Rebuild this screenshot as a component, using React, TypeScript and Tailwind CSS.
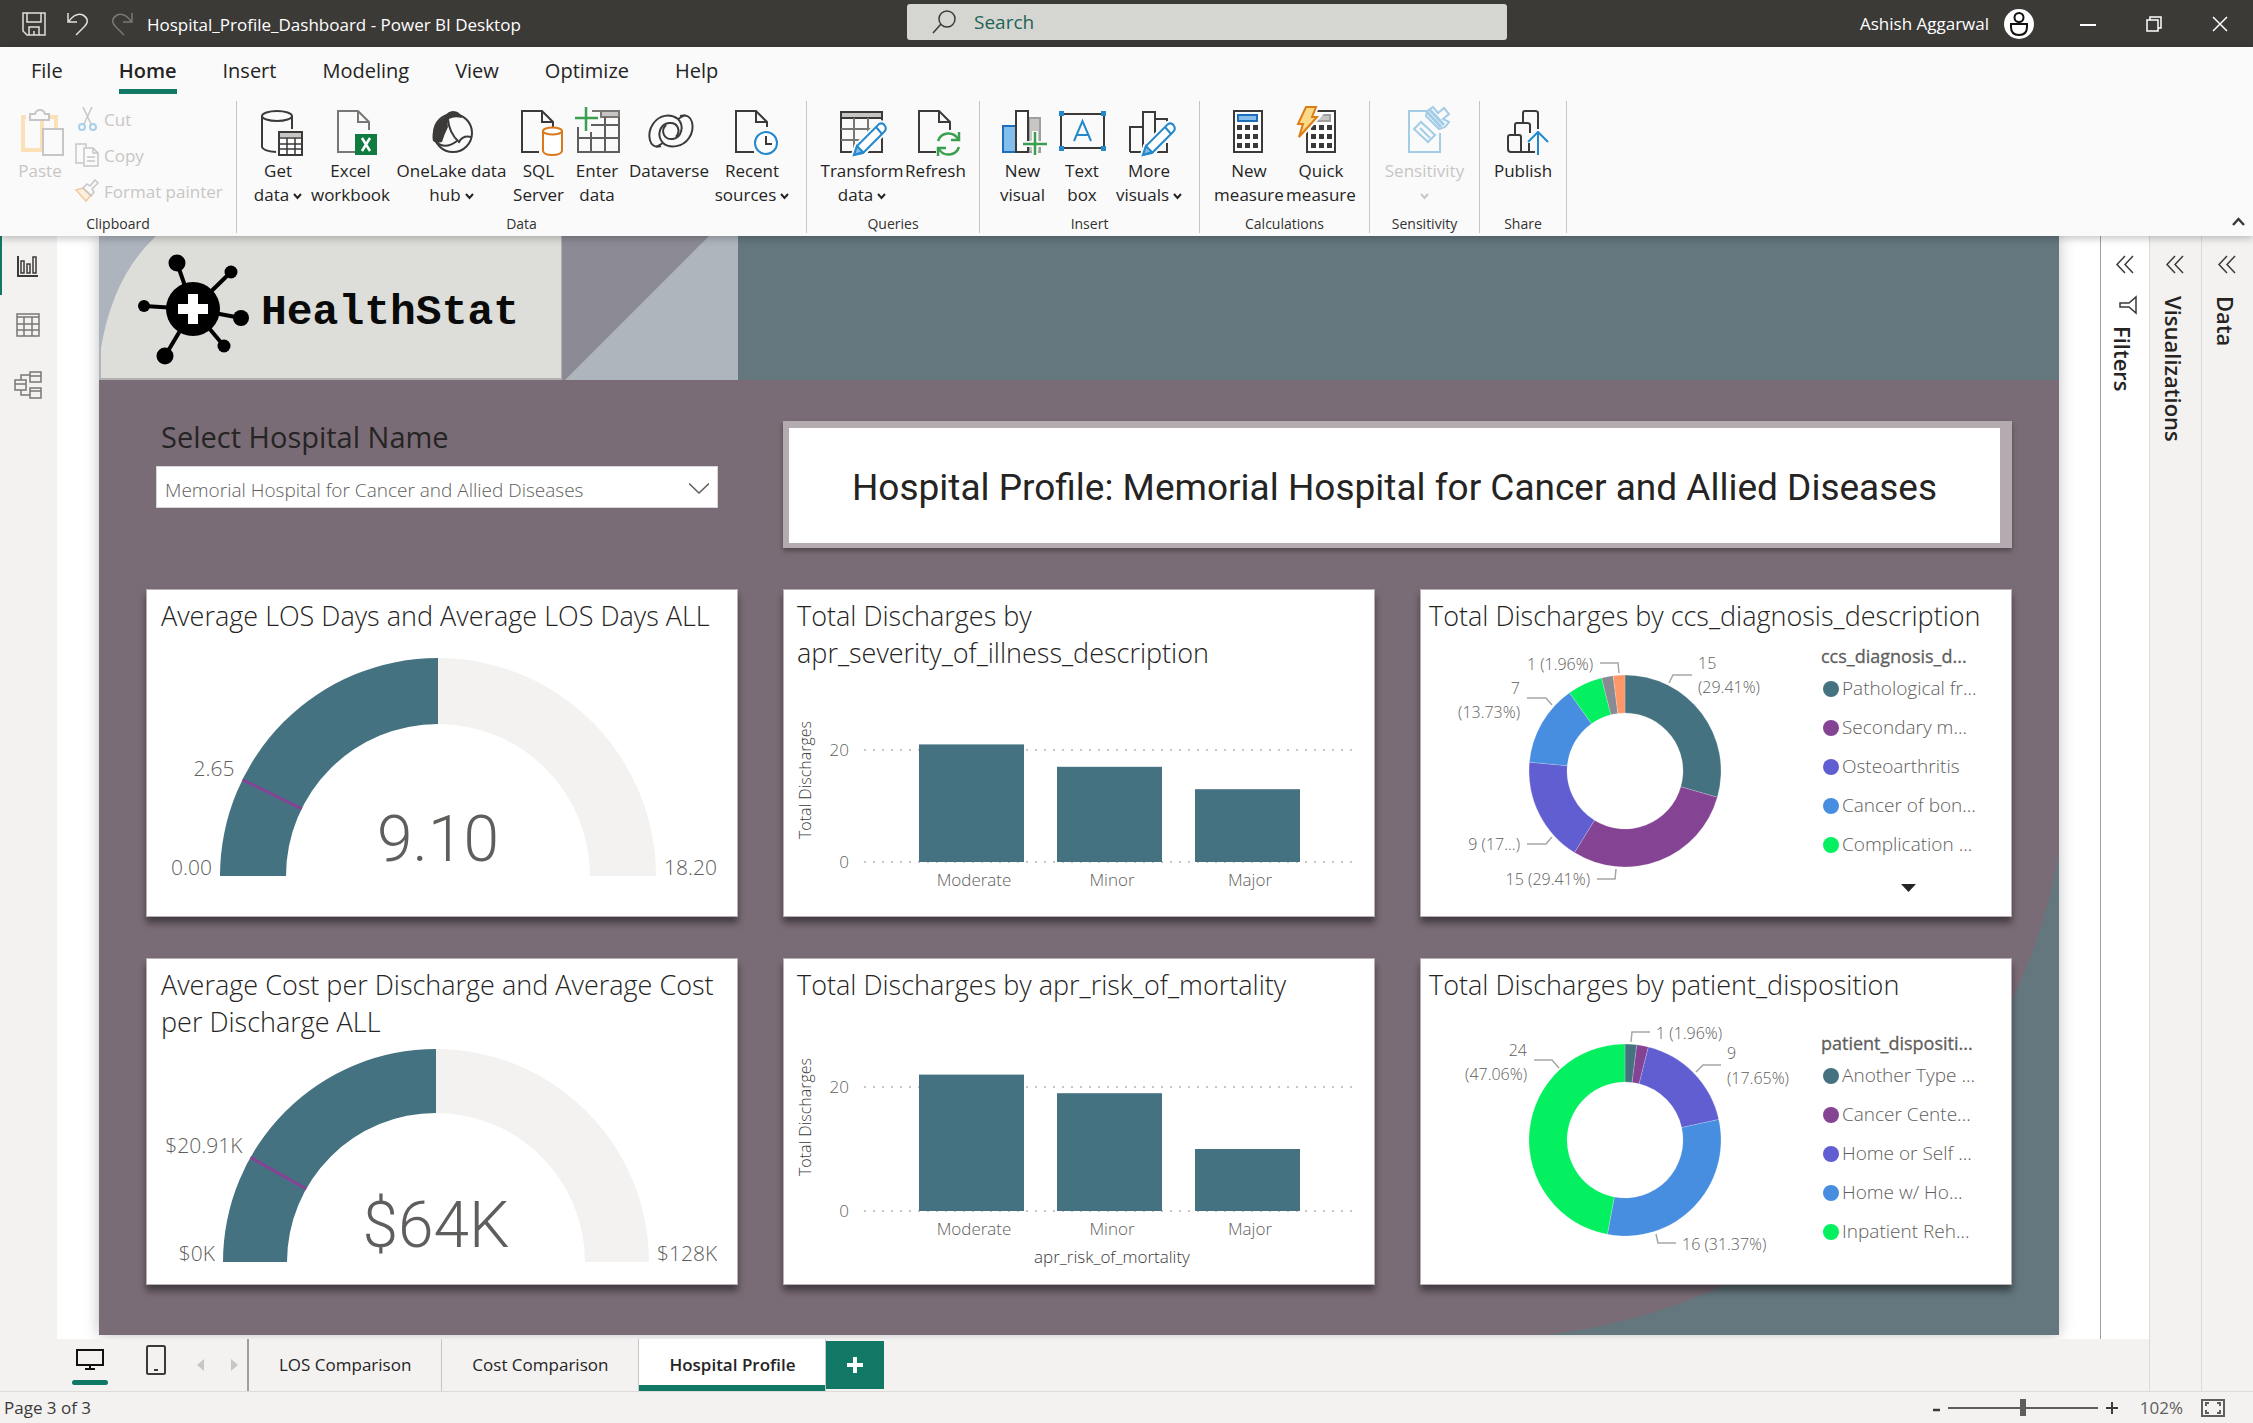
import React, { ReactNode } from "react";

const TEAL = "#457281";
const PURPLE = "#854493";
const INDIGO = "#605ED0";
const BLUE = "#478EE0";
const GREEN = "#04F061";
const GRAY = "#898B94";
const ORANGE = "#FF9768";
const INK = "#3b3a39";
const BLUEINK = "#2488cc";

/* ---------- icons ---------- */

function Icon({ w = 48, h = 50, className = "", children }: { w?: number; h?: number; className?: string; children: ReactNode }) {
  return (
    <svg width={w} height={h} viewBox={`0 0 ${w} ${h}`} fill="none" stroke={INK} strokeWidth={2} className={`shrink-0 overflow-visible ${className}`} aria-hidden="true">
      {children}
    </svg>
  );
}

function Page({ x, c = INK, cut = false }: { x: number; c?: string; cut?: boolean }) {
  return (
    <g stroke={c}>
      <path d={cut ? `M${x + 18} 45H${x}V4h20l11 11v5` : `M${x + 17} 45H${x}V4h20l11 11v8`} />
      <path d={`M${x + 20} 4v11h11`} />
    </g>
  );
}

function Pencil({ x }: { x: number }) {
  return (
    <g transform={`translate(${x} 0)`}>
      <path d="M0 48L3 39L25 17Q29 15 31 19Q33 22 30 25L9 46Z" fill="#fff" stroke="#fafafa" strokeWidth="6" />
      <path d="M0 48L3 39L25 17Q29 15 31 19Q33 22 30 25L9 46Z" fill="#fff" stroke={BLUEINK} />
      <path d="M0 48L3 39L9 45Z" fill="#83beec" stroke={BLUEINK} />
      <path d="M22 20L28 27" stroke={BLUEINK} />
    </g>
  );
}

function CalcKeys({ x, y }: { x: number; y: number }) {
  return (
    <g fill={INK} stroke="none">
      {[0, 9, 18].map((dy) => [0, 8, 16].map((dx) => <rect key={`${dx}-${dy}`} x={x + dx} y={y + dy} width="5" height="5" />))}
    </g>
  );
}

const GetDataIcon = () => (
  <Icon>
    <ellipse cx="23" cy="9" rx="15" ry="5" />
    <path d="M8 9V40Q9 44 22 45M38 9V22" />
    <rect x="25" y="25" width="23" height="23" fill="#fff" />
    <rect x="26" y="26" width="21" height="4" fill="#c8c6c4" stroke="none" />
    <path d="M25 31H48M25 37H48M25 42H48M33 31V48M41 31V48" strokeWidth="1.5" />
  </Icon>
);
const ExcelIcon = () => (
  <Icon>
    <Page x={11} c="#797774" />
    <rect x="28" y="27" width="22" height="21" fill="#107c41" stroke="none" />
    <path d="M35 31L43 44M43 31L35 44" stroke="#fff" strokeWidth="2.5" />
  </Icon>
);
const OneLakeIcon = () => (
  <Icon>
    <circle cx="25" cy="26" r="19" />
    <path d="M16 10Q20 4 25 4Q32 4 34 11Q26 9 21 12Q19 15 20 20Q16 28 14 35Q8 37 5 34Q2 20 16 10Z" fill={INK} stroke="none" />
    <path d="M20 12Q21 26 31 35Q35 28 43 30" />
    <path d="M8 35Q17 43 29 34" />
  </Icon>
);
const SqlIcon = () => (
  <Icon>
    <Page x={7} />
    <path d="M28 24V44Q29 48 37 48Q46 48 47 44V24" fill="#fff" stroke="#d87a1c" />
    <ellipse cx="37.500" cy="24" rx="9.500" ry="3.500" fill="#fff" stroke="#d87a1c" />
  </Icon>
);
const EnterIcon = () => (
  <Icon>
    <path d="M19 4H46V10H28V4" fill="#c8c6c4" stroke="#797774" />
    <path d="M5 20V45H46V10M5 31H46M18 25V45M32 10V45M18 18H46" stroke="#605e5c" />
    <path d="M13 0V24M2 11H25" stroke="#3a9f4f" strokeWidth="2.500" />
  </Icon>
);
const DataverseIcon = () => (
  <Icon>
    <path d="M16 39C3 43 2 26 8 17C14 8 25 6 33 12C40 19 36 31 28 32C19 33 15 24 21 18" />
    <path d="M35 9C49 5 50 22 44 31C38 40 25 42 18 36C11 28 15 17 24 16C33 15 36 24 31 30" />
    <path d="M33 12L40 8M18 36L11 40" />
  </Icon>
);
const RecentIcon = () => (
  <Icon>
    <Page x={8} cut />
    <circle cx="38" cy="36" r="11" fill="#fff" stroke={BLUEINK} />
    <path d="M38 29V37H44" />
  </Icon>
);
const TransformIcon = () => (
  <Icon>
    <rect x="3" y="5" width="41" height="6" fill="#c8c6c4" />
    <path d="M3 11V45H20M44 11V45H30" />
    <path d="M3 22H44M3 33H30M16 11V45M30 11V34" stroke="#797774" />
    <Pencil x={16} />
  </Icon>
);
const RefreshIcon = () => (
  <Icon>
    <Page x={7} />
    <g stroke="#3a9f4f" strokeWidth="2.500">
      <path d="M26 34A11 11 0 0 1 46 32M47 40A11 11 0 0 1 27 42" />
      <path d="M47 25V33H39M26 49V41H34" />
    </g>
  </Icon>
);
const NewVisualIcon = () => (
  <Icon>
    <rect x="30" y="11" width="11" height="34" fill="#c8c6c4" stroke="#a19f9d" />
    <rect x="4" y="19" width="13" height="26" fill="#83beec" stroke="#1c6fb8" />
    <rect x="17" y="4" width="12" height="41" fill="#fff" />
    <path d="M36 24V49M24 37H48" stroke="#fafafa" strokeWidth="6" />
    <path d="M36 25V48M24 37H48" stroke="#3a9f4f" strokeWidth="2.500" />
  </Icon>
);
const TextBoxIcon = () => (
  <Icon>
    <rect x="3" y="7" width="43" height="34" />
    <g fill={BLUEINK} stroke="none">
      <rect x="1" y="4" width="5" height="5" /><rect x="43" y="4" width="5" height="5" />
      <rect x="1" y="39" width="5" height="5" /><rect x="43" y="39" width="5" height="5" />
    </g>
    <path d="M16 34L24.500 14L33 34M19 28H30" stroke={BLUEINK} />
  </Icon>
);
const MoreVisualsIcon = () => (
  <Icon>
    <path d="M5 45V20H18M18 45V5H30V45M30 12H42V20M5 45H20M32 45H42V36" />
    <Pencil x={18} />
  </Icon>
);
const NewMeasureIcon = () => (
  <Icon>
    <rect x="9" y="4" width="28" height="41" fill="#fff" />
    <rect x="13" y="8" width="19" height="6" fill="#83beec" stroke="#1c6fb8" />
    <CalcKeys x={12} y={18} />
  </Icon>
);
const QuickMeasureIcon = () => (
  <Icon>
    <rect x="10" y="4" width="28" height="41" fill="#fff" />
    <rect x="18" y="8" width="15" height="6" fill="#c8c6c4" stroke="#a19f9d" />
    <CalcKeys x={14} y={18} />
    <path d="M9 0H19L15 10H20L2 30L6 17H1Z" fill="#fafafa" stroke="#fafafa" strokeWidth="6" />
    <path d="M9 0H19L15 10H20L2 30L6 17H1Z" fill="#fdd98a" stroke="#dd7d12" />
  </Icon>
);
const SensitivityIcon = () => (
  <Icon className="opacity-40">
    <g stroke={BLUEINK}>
      <path d="M26 4H8V45H39V26" />
      <path d="M13 22L20 15L34 28L27 35Z" />
      <path d="M19 21L29 31" />
      <path d="M25 9L38 22L44 20L48 15L42 12L48 7L43 1L37 6L32 0L26 4Z" />
      <path d="M26 5L40 20M29 3L43 18" strokeWidth="3" />
    </g>
  </Icon>
);
const PublishIcon = () => (
  <Icon>
    <path d="M9 30Q9 28 11 28H20Q22 28 22 30V45H12Q9 45 9 42ZM16 28V18Q16 16 18 16H28Q31 16 31 18V26M24 16V6Q24 4 26 4H36Q39 4 39 6V22M22 45H36M30 36V45" />
    <path d="M39 48V26M29 35L39 25L49 35" stroke={BLUEINK} />
  </Icon>
);

function Caret({ className = "" }: { className?: string }) {
  return (
    <svg width="9" height="7" viewBox="0 0 9 7" className={`inline-block ${className}`} fill="none" stroke="currentColor" strokeWidth="2" aria-hidden="true">
      <path d="M1 1L4.500 5L8 1" />
    </svg>
  );
}

/* ---------- title bar ---------- */

function TitleBar() {
  return (
    <header className="flex h-[47px] items-center bg-[#3b3a37] text-[17px] text-white">
      <div className="flex w-[907px] shrink-0 items-center pl-[22px]">
        <button aria-label="Save" className="mr-5">
          <Icon w={24} h={24}>
            <g stroke="#e1dfdd" strokeWidth="1.500">
              <path d="M1 1H23V23H5L1 19Z" /><path d="M5 1V10H19V1M7 23V15H17V23M12 19V23" />
            </g>
          </Icon>
        </button>
        <button aria-label="Undo" className="mr-5">
          <Icon w={24} h={24}><path d="M2 1V10H11M3 9Q10 0 17 3Q25 8 18 15L10 23" stroke="#e1dfdd" strokeWidth="1.500" /></Icon>
        </button>
        <button aria-label="Redo" className="mr-[13px]">
          <Icon w={24} h={24}><path d="M22 1V10H13M21 9Q14 0 7 3Q-1 8 6 15L14 23" stroke="#7a7876" strokeWidth="1.500" /></Icon>
        </button>
        <h1 className="pt-0.5">Hospital_Profile_Dashboard - Power BI Desktop</h1>
      </div>
      <label className="mb-1 flex h-9 w-[600px] items-center gap-[18px] rounded-[3px] bg-[#d5d5d2] pl-[25px]">
        <Icon w={24} h={24}><circle cx="15" cy="9" r="8" strokeWidth="1.500" /><path d="M9 14L1 23" strokeWidth="1.500" /></Icon>
        <input type="search" aria-label="Search" placeholder="Search" className="w-full bg-transparent pt-0.5 text-[19px] outline-none placeholder:text-[#1f6455]" />
      </label>
      <div className="ml-auto flex items-center pr-[25px]">
        <span className="mr-[15px]">Ashish Aggarwal</span>
        <button aria-label="Account" className="mr-[46px]">
          <Icon w={30} h={30}>
            <circle cx="15" cy="15" r="15" fill="#fff" stroke="none" />
            <circle cx="15" cy="8.500" r="4.500" stroke="#111" /><path d="M7 15H23V18Q23 26 15 26Q7 26 7 18Z" stroke="#111" />
          </Icon>
        </button>
        <button aria-label="Minimize" className="mr-[50px]"><Icon w={16} h={16}><path d="M0 9H16" stroke="#fff" /></Icon></button>
        <button aria-label="Restore" className="mr-[50px]"><Icon w={16} h={16}><path d="M1 4H12V15H1ZM4 4V1H15V12H12" stroke="#fff" strokeWidth="1.500" /></Icon></button>
        <button aria-label="Close"><Icon w={16} h={16}><path d="M1 1L15 15M15 1L1 15" stroke="#fff" strokeWidth="1.500" /></Icon></button>
      </div>
    </header>
  );
}

/* ---------- ribbon ---------- */

function Tool({ icon, top, bottom, caret, className, disabled }: { icon: ReactNode; top: string; bottom?: string; caret?: boolean; className: string; disabled?: boolean }) {
  return (
    <button disabled={disabled} className={`flex flex-col items-center whitespace-nowrap leading-6 ${disabled ? "text-[#c8c6c4]" : "text-[#252423]"} ${className}`}>
      <span className="mb-0.5 block">{icon}</span>
      <span>{top}</span>
      <span>{bottom}{caret && <Caret className={bottom ? "ml-1" : ""} />}</span>
    </button>
  );
}

function Group({ label, className, children }: { label: string; className: string; children: ReactNode }) {
  return (
    <section aria-label={label} className="flex flex-col border-r border-[#c8c6c4]">
      <div className={`flex h-[114px] pt-1.5 ${className}`}>{children}</div>
      <div className="text-center text-sm leading-[18px] text-[#323130]">{label}</div>
    </section>
  );
}

const menu = [
  { name: "File", cls: "mr-14" },
  { name: "Home", cls: "mr-[46px] font-semibold", active: true },
  { name: "Insert", cls: "mr-[46px]" },
  { name: "Modeling", cls: "mr-[46px]" },
  { name: "View", cls: "mr-[46px]" },
  { name: "Optimize", cls: "mr-[46px]" },
  { name: "Help", cls: "" },
];

function Ribbon() {
  return (
    <div className="relative z-10 bg-[#fafafa] pb-[3px] text-[17px] shadow-[0_2px_8px_rgba(0,0,0,0.25)]">
      <nav className="flex h-[54px] pl-[31px] text-xl text-[#252423]">
        {menu.map((m) => (
          <button key={m.name} className={`flex flex-col items-center pt-2 leading-8 ${m.cls}`}>
            {m.name}
            {m.active && <span className="mt-0.5 h-[5px] w-full bg-[#117865]" />}
          </button>
        ))}
      </nav>
      <div className="flex">
        <Group label="Clipboard" className="w-[236px] pl-[17px] text-[#c8c6c4]">
          <button disabled className="mr-3 flex w-[46px] flex-col items-center leading-6">
            <span className="mb-0.5 block">
              <Icon>
                <path d="M10 10H7V43H26V10M40 24V10H34" stroke="#fbe0b8" strokeWidth="4" />
                <path d="M14 7H19Q20 3 24 3Q28 3 29 7H33V13H14Z" fill="#fafafa" stroke="#c8c6c4" />
                <rect x="27" y="22" width="20" height="26" fill="#fafafa" stroke="#c8c6c4" />
              </Icon>
            </span>
            Paste
          </button>
          <div className="flex flex-col">
            <button disabled className="flex h-9 items-start gap-[5px]">
              <Icon w={24} h={24}><path d="M8 0L16 17M17 0L9 17" stroke="#c8c6c4" strokeWidth="1.500" /><circle cx="7" cy="20" r="3" stroke="#a7d0ea" /><circle cx="18" cy="20" r="3" stroke="#a7d0ea" /></Icon>Cut
            </button>
            <button disabled className="flex h-9 items-start gap-[5px]">
              <Icon w={24} h={24}><g stroke="#c8c6c4" strokeWidth="1.500"><path d="M8 20H1V1H11V4M9 5H18L23 10V23H9ZM18 5V10H23M12 14H20M12 18H20" /></g></Icon>Copy
            </button>
            <button disabled className="flex h-9 items-start gap-[5px]">
              <Icon w={24} h={24}><path d="M1 11L8 9L16 16L11 22Z" fill="#fdeedd" stroke="#f3c99d" strokeWidth="1.500" /><path d="M8 9L12 5L15 7L20 1L23 4L17 10L19 13L16 17Z" stroke="#c8c6c4" strokeWidth="1.500" /></Icon>Format painter
            </button>
          </div>
        </Group>
        <Group label="Data" className="pr-[14px] pl-3">
          <Tool icon={<GetDataIcon />} top="Get" bottom="data" caret className="w-[58px]" />
          <Tool icon={<ExcelIcon />} top="Excel" bottom="workbook" className="w-[87px]" />
          <Tool icon={<OneLakeIcon />} top="OneLake data" bottom="hub" caret className="w-[115px]" />
          <Tool icon={<SqlIcon />} top="SQL" bottom="Server" className="w-[59px]" />
          <Tool icon={<EnterIcon />} top="Enter" bottom="data" className="w-[58px]" />
          <Tool icon={<DataverseIcon />} top="Dataverse" className="w-[86px]" />
          <Tool icon={<RecentIcon />} top="Recent" bottom="sources" caret className="w-20" />
        </Group>
        <Group label="Queries" className="pr-3 pl-[13px]">
          <Tool icon={<TransformIcon />} top="Transform" bottom="data" caret className="w-[84px]" />
          <Tool icon={<RefreshIcon />} top="Refresh" className="w-[63px]" />
        </Group>
        <Group label="Insert" className="px-[14px]">
          <Tool icon={<NewVisualIcon />} top="New" bottom="visual" className="w-[57px]" />
          <Tool icon={<TextBoxIcon />} top="Text" bottom="box" className="w-[62px]" />
          <Tool icon={<MoreVisualsIcon />} top="More" bottom="visuals" caret className="w-[72px]" />
        </Group>
        <Group label="Calculations" className="pr-3 pl-[13px]">
          <Tool icon={<NewMeasureIcon />} top="New" bottom="measure" className="w-[72px]" />
          <Tool icon={<QuickMeasureIcon />} top="Quick" bottom="measure" className="w-[72px]" />
        </Group>
        <Group label="Sensitivity" className="px-[10px]">
          <Tool icon={<SensitivityIcon />} top="Sensitivity" caret disabled className="w-[89px]" />
        </Group>
        <Group label="Share" className="px-[10px]">
          <Tool icon={<PublishIcon />} top="Publish" className="w-[66px]" />
        </Group>
        <button aria-label="Collapse ribbon" className="mt-auto mr-2 mb-1.5 ml-auto">
          <Icon w={13} h={10}><path d="M1 8L6.500 2L12 8" strokeWidth="2.500" /></Icon>
        </button>
      </div>
    </div>
  );
}

/* ---------- side rails ---------- */

function ViewRail() {
  return (
    <nav className="flex w-[57px] shrink-0 flex-col bg-[#f3f2f1]">
      <button aria-label="Report view" className="flex h-[59px] items-center border-l-2 border-[#117865] pl-[14px]">
        <Icon w={24} h={24}><g strokeWidth="1.500"><path d="M2 2V22H22" strokeWidth="2" /><path d="M5 7H8V19H5ZM11 10H14V19H11ZM17 3H20V19H17Z" /></g></Icon>
      </button>
      <button aria-label="Table view" className="flex h-[60px] items-center pl-4">
        <Icon w={24} h={24}><g stroke="#797774" strokeWidth="1.500"><path d="M1 1H23V23H1ZM1 4H23M1 11H23M1 17H23M8 4V23M16 4V23" /></g></Icon>
      </button>
      <button aria-label="Model view" className="flex h-[60px] items-center pl-[14px]">
        <Icon w={28} h={28}><g stroke="#797774" strokeWidth="1.500"><path d="M16 1H27V11H16ZM16 5H27M1 9H12V19H1ZM1 13H12M16 17H27V27H16ZM16 20H27M7 9V4H16M7 19V24H16" /></g></Icon>
      </button>
    </nav>
  );
}

function Pane({ label, className, funnel }: { label: string; className: string; funnel?: boolean }) {
  return (
    <aside className={`flex shrink-0 flex-col items-center border-l pt-[19px] ${className}`}>
      <button aria-label={`Expand ${label}`}>
        <Icon w={19} h={19}><path d="M9 1L1 9.500L9 18M17 1L9 9.500L17 18" strokeWidth="1.500" /></Icon>
      </button>
      {funnel && <Icon w={18} h={18} className="mt-[22px] ml-1.5"><path d="M17 1V17L10 11H1V7H10Z" strokeWidth="1.500" /></Icon>}
      <h2 className={`mr-1 text-[22px] leading-8 font-semibold text-[#252423] [writing-mode:vertical-rl] ${funnel ? "mt-3" : "mt-[22px]"}`}>{label}</h2>
    </aside>
  );
}

/* ---------- charts ---------- */

const cardCls = "flex flex-col bg-white shadow-[inset_0_0_0_1px_#b9b0b6,0_6px_7px_rgba(0,0,0,0.45)]";

function Card({ title, className = "px-[15px]", children }: { title: ReactNode; className?: string; children: ReactNode }) {
  return (
    <article className={cardCls}>
      <h3 className={`pt-2 pb-px text-[27px] leading-[37px] font-light text-[#252423] ${className}`}>{title}</h3>
      {children}
    </article>
  );
}

function arc(cx: number, cy: number, r: number, ri: number, a0: number, a1: number) {
  const p = (rad: number, a: number) => `${(cx + rad * Math.sin(a)).toFixed(2)} ${(cy - rad * Math.cos(a)).toFixed(2)}`;
  const big = a1 - a0 > Math.PI ? 1 : 0;
  return `M${p(r, a0)}A${r} ${r} 0 ${big} 1 ${p(r, a1)}L${p(ri, a1)}A${ri} ${ri} 0 ${big} 0 ${p(ri, a0)}Z`;
}

interface GaugeProps { top: number; height: number; cx: number; cy: number; r: number; ri: number; target: number; targetLabel: string; min: string; max: string; value: string }

function Gauge({ top, height, cx, cy, r, ri, target, targetLabel, min, max, value }: GaugeProps) {
  const a = target * Math.PI;
  const c = Math.cos(a);
  const s = Math.sin(a);
  return (
    <svg viewBox={`0 ${top} 592 ${height}`} className="block w-full font-light" fill="#605e5c" fontSize="21">
      <path d={arc(cx, cy, r, ri, -Math.PI / 2, 0)} fill={TEAL} />
      <path d={arc(cx, cy, r, ri, 0, Math.PI / 2)} fill="#f3f2f1" />
      <path d={`M${cx - r * c} ${cy - r * s}L${cx - ri * c} ${cy - ri * s}`} stroke={PURPLE} strokeWidth="3" />
      <text x={cx - r * c - 8} y={cy - r * s - 4} textAnchor="end">{targetLabel}</text>
      <text x={cx - r - 8} y={cy - 1} textAnchor="end">{min}</text>
      <text x={cx + r + 8} y={cy - 1}>{max}</text>
      <text x={cx} y={cy - 15} textAnchor="middle" fontSize="64" className="font-[Roboto] font-light">{value}</text>
    </svg>
  );
}

interface BarsProps { top: number; height: number; y20: number; y0: number; titleY: number; values: number[]; axis?: string }

function Bars({ top, height, y20, y0, titleY, values, axis }: BarsProps) {
  const unit = (y0 - y20) / 20;
  return (
    <svg viewBox={`0 ${top} 592 ${height}`} className="block w-full font-light" fill="#605e5c" fontSize="17">
      <g stroke="#c8c6c4" strokeWidth="2" strokeDasharray="2 7">
        <path d={`M81 ${y20}H570M81 ${y0}H570`} />
      </g>
      <text x="66" y={y20 + 6} textAnchor="end">20</text>
      <text x="66" y={y0 + 6} textAnchor="end">0</text>
      <text transform={`translate(28 ${titleY}) rotate(-90)`} textAnchor="middle" fontSize="16" fill="#3b3a39">Total Discharges</text>
      {["Moderate", "Minor", "Major"].map((name, i) => (
        <g key={name}>
          <rect x={136 + i * 138} y={y0 - values[i] * unit} width="105" height={values[i] * unit} fill={TEAL} />
          <text x={191 + i * 138} y={y0 + 24} textAnchor="middle">{name}</text>
        </g>
      ))}
      {axis && <text x="329" y={y0 + 52} textAnchor="middle" fill="#3b3a39">{axis}</text>}
    </svg>
  );
}

function Donut({ top, height, cy, slices, children }: { top: number; height: number; cy: number; slices: [number, string][]; children: ReactNode }) {
  let acc = 0;
  return (
    <svg viewBox={`0 ${top} 400 ${height}`} className="block w-[400px] shrink-0 font-light" fill="#605e5c" fontSize="16">
      {slices.map(([n, color], i) => {
        const a0 = (acc / 51) * 2 * Math.PI;
        acc += n;
        return <path key={i} d={arc(205, cy, 96, 58, a0, (acc / 51) * 2 * Math.PI)} fill={color} stroke="#fff" strokeOpacity="0.4" strokeWidth="0.500" />;
      })}
      {children}
    </svg>
  );
}

function Leader({ d }: { d: string }) {
  return <path d={d} fill="none" stroke="#a6a6a6" strokeWidth="1.500" />;
}

function Legend({ title, items, className, more }: { title: string; items: [string, string][]; className: string; more?: boolean }) {
  return (
    <div className={`w-[170px] text-[19px] whitespace-nowrap text-[#605e5c] ${className}`}>
      <div className="pl-px text-lg leading-[26px] font-normal [-webkit-text-stroke:0.3px_#605e5c]">{title}</div>
      <ul className="font-light">
        {items.map(([name, dot]) => (
          <li key={name} className="flex h-[39px] items-center gap-[3px] pl-[3px]">
            <span className={`size-4 shrink-0 rounded-full ${dot}`} />
            {name}
          </li>
        ))}
      </ul>
      {more && (
        <button aria-label="More legend items" className="mt-5 ml-[81px] block">
          <svg width="15" height="8" viewBox="0 0 15 8" aria-hidden="true"><path d="M0 0H15L7.500 8Z" fill="#252423" /></svg>
        </button>
      )}
    </div>
  );
}

/* ---------- report canvas ---------- */

function LogoBanner() {
  return (
    <div className="flex h-[144px]">
      <svg width="463" height="144" viewBox="0 0 463 144" className="shrink-0" role="img" aria-label="HealthStat logo">
        <rect width="463" height="144" fill="#dddeda" />
        <path d="M0 0H57Q14 40 2 112V144H0Z" fill="#adb4bd" />
        <path d="M0 143H463M463 0V144" stroke="#b3aeb1" strokeWidth="2" />
        <g stroke="#000" strokeWidth="4">
          <path d="M94 73L78 27M94 73L132 36M94 73L45 70M94 73L142 82M94 73L125 110M94 73L66 120" />
        </g>
        <circle cx="94" cy="73" r="27" />
        <circle cx="78" cy="27" r="8.500" /><circle cx="132" cy="36" r="6.500" /><circle cx="45" cy="70" r="6" />
        <circle cx="142" cy="82" r="8" /><circle cx="125" cy="110" r="6.500" /><circle cx="66" cy="120" r="8.500" />
        <path d="M89 58H99V68H109V78H99V88H89V78H79V68H89Z" fill="#fff" />
        <text x="162" y="88" fontSize="43" className="font-['Liberation_Mono'] font-bold" fill="#0a0a0a">HealthStat</text>
      </svg>
      <svg width="176" height="144" viewBox="0 0 176 144" className="shrink-0" aria-hidden="true">
        <rect width="176" height="144" fill="#8c8a94" />
        <path d="M3 144L147 0H176V144Z" fill="#aeb5bd" />
      </svg>
      <div className="grow bg-[#64777e]" />
    </div>
  );
}

function Report() {
  return (
    <div className="relative w-full overflow-hidden bg-[#7a6c76]">
      <svg viewBox="0 0 1960 1099" className="absolute inset-0 h-full w-full" preserveAspectRatio="none" aria-hidden="true">
        <path d="M1960 617A590 590 0 0 1 1448 1099H1960Z" fill="#64777e" />
      </svg>
      <div className="relative">
        <LogoBanner />
        <div className="grid grid-cols-3 gap-x-[45px] gap-y-[41px] px-[47px] pt-[41px] pb-[50px]">
          <div className="pr-5 pl-[10px]">
            <label htmlFor="hospital" className="block pl-[5px] text-[29px] leading-8 text-[#252423]">Select Hospital Name</label>
            <div className="relative mt-[13px]">
              <select id="hospital" className="h-[42px] w-full appearance-none border border-[#d8d5d7] bg-white pt-1.5 pl-2 text-[19px] font-light text-[#605e5c]">
                <option>Memorial Hospital for Cancer and Allied Diseases</option>
              </select>
              <svg width="20" height="11" viewBox="0 0 20 11" className="pointer-events-none absolute top-[17px] right-[9px]" fill="none" stroke="#605e5c" strokeWidth="1.500" aria-hidden="true"><path d="M0 0.500L10 10L20 0.500" /></svg>
            </div>
          </div>
          <div className="col-span-2 flex h-[127px] items-center justify-center border-t-[7px] border-r-[12px] border-b-[5px] border-l-[6px] border-[#b3abb0] bg-white shadow-[0_3px_5px_rgba(0,0,0,0.35)]">
            <h2 className="pt-1 font-[Roboto] text-[37px] text-[#252423]">Hospital Profile: Memorial Hospital for Cancer and Allied Diseases</h2>
          </div>

          <Card title="Average LOS Days and Average LOS Days ALL">
            <Gauge top={46} height={282} cx={292} cy={287} r={218} ri={152} target={2.65 / 18.2} targetLabel="2.65" min="0.00" max="18.20" value="9.10" />
          </Card>
          <Card title={<>Total Discharges by<br />apr_severity_of_illness_description</>} className="px-[14px]">
            <Bars top={83} height={245} y20={161} y0={273} titleY={191} values={[21, 17, 13]} />
          </Card>
          <Card title="Total Discharges by ccs_diagnosis_description" className="px-[9px]">
            <div className="flex">
              <Donut top={46} height={282} cy={182} slices={[[15, TEAL], [15, PURPLE], [9, INDIGO], [7, BLUE], [3, GREEN], [1, GRAY], [1, ORANGE]]}>
                <text x="173" y="81" textAnchor="end">1 (1.96%)</text>
                <Leader d="M180 74H198L199 84" />
                <text x="278" y="80">15</text>
                <text x="278" y="104">(29.41%)</text>
                <Leader d="M249 94L253 86H272" />
                <text x="100" y="105" textAnchor="end">7</text>
                <text x="100" y="129" textAnchor="end">(13.73%)</text>
                <Leader d="M107 109H126L132 116" />
                <text x="100" y="261" textAnchor="end">9 (17...)</text>
                <Leader d="M107 255H126L132 248" />
                <text x="170" y="296" textAnchor="end">15 (29.41%)</text>
                <Leader d="M177 290H195L196 280" />
              </Donut>
              <Legend className="pt-2" title="ccs_diagnosis_d..." more items={[["Pathological fr...", "bg-[#457281]"], ["Secondary m...", "bg-[#854493]"], ["Osteoarthritis", "bg-[#605ed0]"], ["Cancer of bon...", "bg-[#478ee0]"], ["Complication ...", "bg-[#04f061]"]]} />
            </div>
          </Card>

          <Card title="Average Cost per Discharge and Average Cost per Discharge ALL">
            <Gauge top={83} height={244} cx={290} cy={304} r={213} ri={149} target={20.91 / 128} targetLabel="$20.91K" min="$0K" max="$128K" value="$64K" />
          </Card>
          <Card title="Total Discharges by apr_risk_of_mortality" className="px-[14px]">
            <Bars top={46} height={281} y20={129} y0={253} titleY={159} values={[22, 19, 10]} axis="apr_risk_of_mortality" />
          </Card>
          <Card title="Total Discharges by patient_disposition" className="px-[9px]">
            <div className="flex">
              <Donut top={46} height={281} cy={182} slices={[[1, TEAL], [1, PURPLE], [9, INDIGO], [16, BLUE], [24, GREEN]]}>
                <text x="236" y="81">1 (1.96%)</text>
                <Leader d="M211 84L212 74H230" />
                <text x="307" y="101">9</text>
                <text x="307" y="126">(17.65%)</text>
                <Leader d="M276 114L283 107H301" />
                <text x="107" y="98" textAnchor="end">24</text>
                <text x="107" y="122" textAnchor="end">(47.06%)</text>
                <Leader d="M114 102H132L139 110" />
                <text x="262" y="292">16 (31.37%)</text>
                <Leader d="M236 276L238 285H256" />
              </Donut>
              <Legend className="pt-[26px]" title="patient_dispositi..." items={[["Another Type ...", "bg-[#457281]"], ["Cancer Cente...", "bg-[#854493]"], ["Home or Self ...", "bg-[#605ed0]"], ["Home w/ Ho...", "bg-[#478ee0]"], ["Inpatient Reh...", "bg-[#04f061]"]]} />
            </div>
          </Card>
        </div>
      </div>
    </div>
  );
}

/* ---------- bottom bars ---------- */

function PageTabs() {
  return (
    <div className="flex h-[52px] items-stretch bg-[#f3f2f1] text-[17px] text-[#252423]">
      <div className="flex w-[249px] shrink-0 items-start border-r-2 border-[#a19f9d] pl-[72px]">
        <button aria-label="Desktop layout" className="mr-[38px] flex w-9 flex-col items-center pt-2.5">
          <Icon w={28} h={20}><path d="M1 1H27V16H1ZM14 16V20M9 20H19" stroke="#111" /></Icon>
          <span className="mt-[11px] h-[5px] w-full rounded-full bg-[#117865]" />
        </button>
        <button aria-label="Mobile layout" className="mr-[31px] pt-1.5">
          <Icon w={20} h={30}><rect x="1" y="1" width="18" height="28" rx="1.500" /><path d="M8 25H12" /></Icon>
        </button>
        <button aria-label="Previous page" className="mr-[27px] pt-5"><Icon w={7} h={12}><path d="M7 0V12L0 6Z" fill="#c8c6c4" stroke="none" /></Icon></button>
        <button aria-label="Next page" className="pt-5"><Icon w={7} h={12}><path d="M0 0V12L7 6Z" fill="#c8c6c4" stroke="none" /></Icon></button>
      </div>
      <button className="border-r border-[#c8c6c4] px-[30px]">LOS Comparison</button>
      <button className="border-r border-[#c8c6c4] px-[30px]">Cost Comparison</button>
      <button className="flex flex-col border-r border-[#c8c6c4] bg-white font-semibold">
        <span className="flex grow items-center px-[30px] pt-1.5">Hospital Profile</span>
        <span className="h-1.5 w-full bg-[#117865]" />
      </button>
      <button aria-label="New page" className="my-0.5 flex w-[58px] items-center justify-center bg-[#117865]">
        <Icon w={16} h={16}><path d="M8 0V16M0 8H16" stroke="#fff" strokeWidth="4" /></Icon>
      </button>
    </div>
  );
}

function StatusBar() {
  return (
    <footer className="flex h-8 items-center border-t border-[#dddbd9] bg-[#f3f2f1] pr-7 pl-1 text-[17px] text-[#3b3a39]">
      <span>Page 3 of 3</span>
      <div className="ml-auto flex items-center">
        <button aria-label="Zoom out"><Icon w={7} h={16}><path d="M0 10H7" strokeWidth="2.500" /></Icon></button>
        <input
          type="range" aria-label="Zoom" min="0" max="200" defaultValue="100"
          className="mx-2 h-[17px] w-[150px] appearance-none bg-[linear-gradient(#605e5c,#605e5c)] bg-[length:100%_2px] bg-center bg-no-repeat [&::-webkit-slider-thumb]:h-[17px] [&::-webkit-slider-thumb]:w-1.5 [&::-webkit-slider-thumb]:appearance-none [&::-webkit-slider-thumb]:bg-[#605e5c]"
        />
        <button aria-label="Zoom in"><Icon w={12} h={12}><path d="M6 0V12M0 6H12" /></Icon></button>
        <span className="mr-[18px] ml-[22px] text-[#605e5c]">102%</span>
        <button aria-label="Fit to page"><Icon w={24} h={18}><path d="M1 1H23V17H1ZM5 7V4H8M16 4H19V7M19 11V14H16M8 14H5V11" stroke="#605e5c" /></Icon></button>
      </div>
    </footer>
  );
}

export default function App() {
  return (
    <div className="flex min-h-screen flex-col bg-[#f3f2f1] font-['Open_Sans','Noto_Sans',sans-serif]">
      <TitleBar />
      <Ribbon />
      <div className="flex grow">
        <div className="flex min-w-0 grow flex-col">
          <div className="flex grow">
            <ViewRail />
            <main className="min-w-0 grow bg-white pr-[41px] pb-1 pl-[42px]">
              <div className="shadow-[0_0_14px_rgba(0,0,0,0.25)]"><Report /></div>
            </main>
            <Pane label="Filters" funnel className="w-[49px] border-[#a19f9d] bg-white" />
          </div>
          <PageTabs />
        </div>
        <Pane label="Visualizations" className="w-[52px] border-[#dddbd9] bg-[#f3f2f1]" />
        <Pane label="Data" className="w-[52px] border-[#dddbd9] bg-[#f3f2f1]" />
      </div>
      <StatusBar />
    </div>
  );
}
